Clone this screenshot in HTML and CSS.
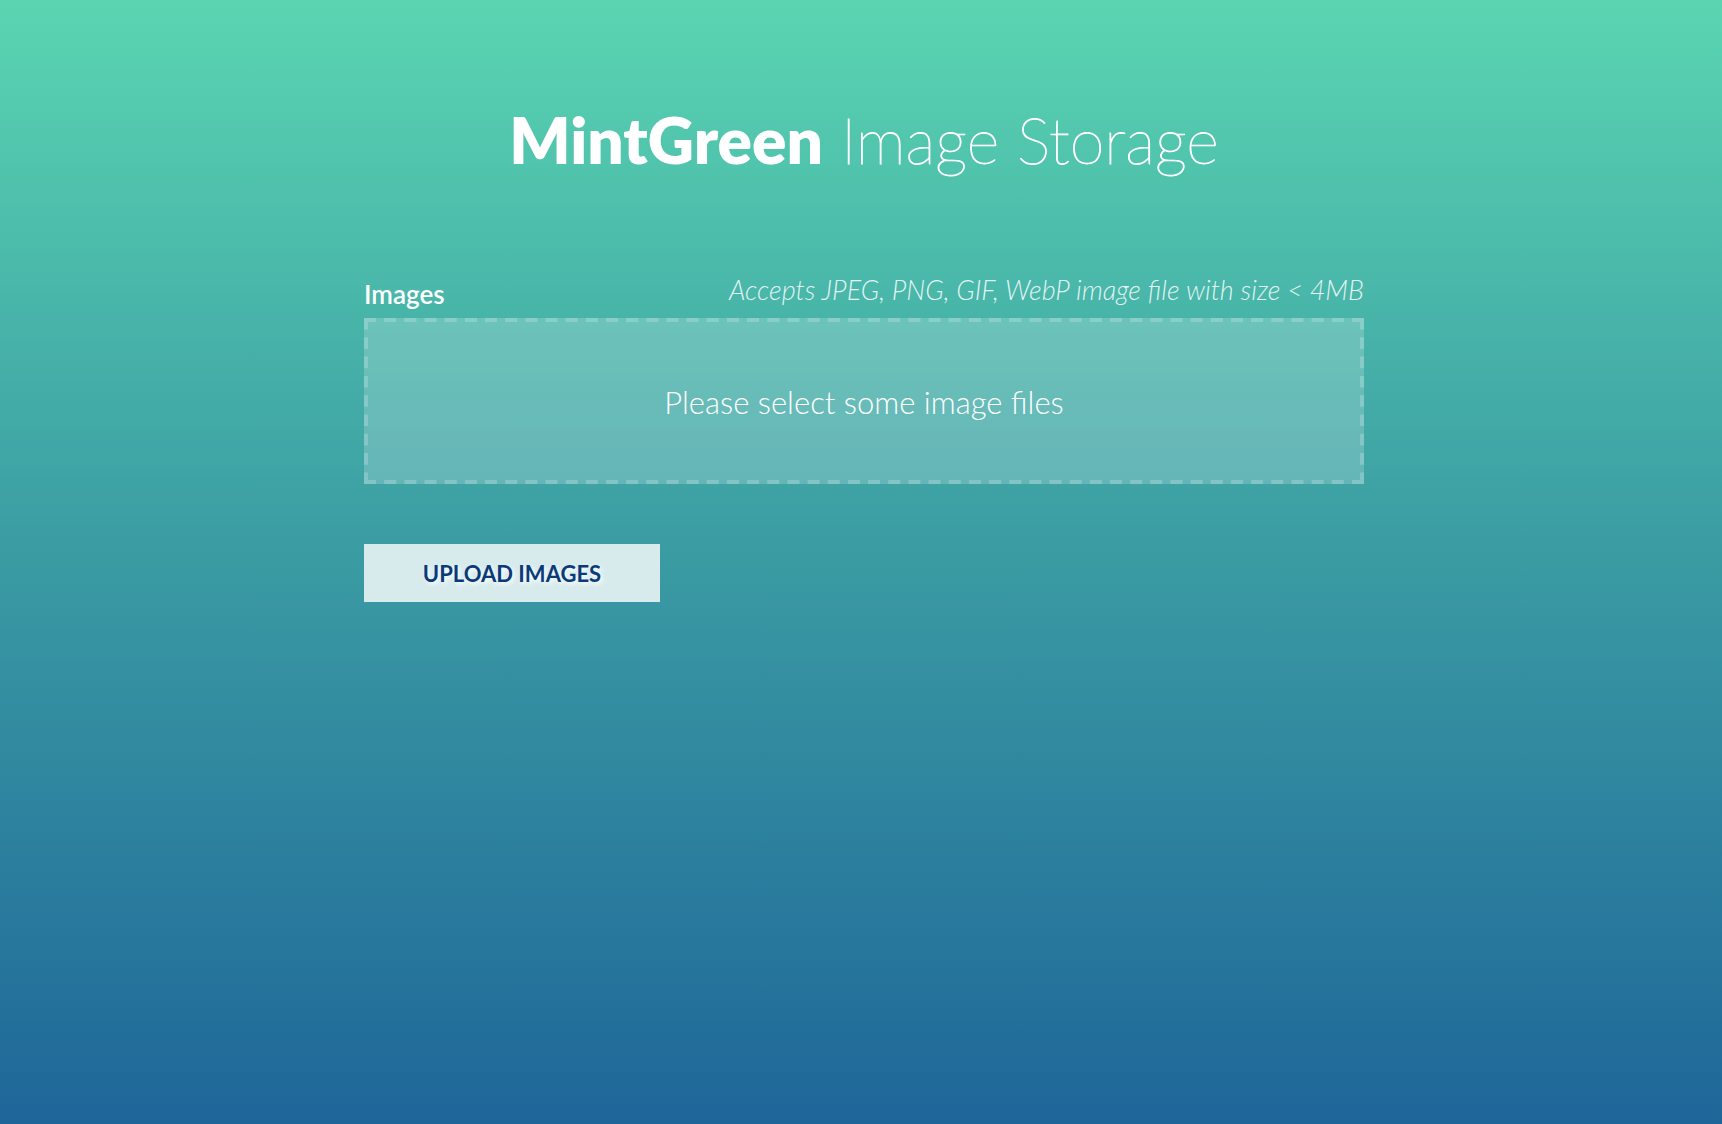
FILE: index.html
```html
<!DOCTYPE html>
<html lang="en">
<head>
<meta charset="utf-8">
<meta name="viewport" content="width=device-width, initial-scale=1">
<title>MintGreen Image Storage</title>
<link rel="stylesheet" href="styles.css">
</head>
<body>
<main class="page">
  <h1 class="title"><strong>MintGreen</strong> Image Storage</h1>
  <form class="upload">
    <div class="upload-head">
      <label class="upload-label" for="images">Images</label>
      <span class="upload-hint" id="hint">Accepts JPEG, PNG, GIF, WebP image file with size &lt; 4MB</span>
    </div>
    <label class="dropzone">
      <svg class="dashes" aria-hidden="true">
        <line x1="0" y1="0" x2="100%" y2="0" pathLength="992"/>
        <line x1="0" y1="100%" x2="100%" y2="100%" pathLength="992"/>
        <line x1="0" y1="0" x2="0" y2="100%" pathLength="172"/>
        <line x1="100%" y1="0" x2="100%" y2="100%" pathLength="172"/>
      </svg>
      <input class="file-input" type="file" id="images" accept="image/*" aria-describedby="hint" multiple>
      <span>Please select some image files</span>
    </label>
    <button class="submit" type="submit">UPLOAD IMAGES</button>
  </form>
</main>
</body>
</html>
```
FILE: styles.css
```css
* { box-sizing: border-box; }

body {
  margin: 0;
  min-height: 100vh;
  padding-left: 6px;
  color: #fff;
  font-family: Lato, sans-serif;
  background: linear-gradient(#5ad5b1, #3a9ba3 50%, #1e6699);
}

.page {
  width: 100%;
  max-width: 1000px;
  margin: 0 auto;
  padding-top: 100px;
}

.title {
  margin: 0 0 80px;
  font-size: 63px;
  line-height: 80px;
  font-weight: 200;
  text-align: center;
  -webkit-text-stroke: 1px #fff;
}

.title strong {
  font-size: 64px;
  font-weight: 800;
  -webkit-text-stroke: 0;
}

.upload-head {
  display: flex;
  justify-content: space-between;
  align-items: flex-start;
  height: 58px;
}

.upload-label {
  padding-top: 18px;
  font-size: 26px;
  line-height: 32px;
  font-weight: 600;
}

.upload-hint {
  padding-top: 14px;
  color: rgba(255, 255, 255, 0.85);
  font-size: 27px;
  line-height: 32px;
  font-weight: 300;
  font-style: italic;
}

.dropzone {
  position: relative;
  display: flex;
  align-items: center;
  justify-content: center;
  min-height: 166px;
  padding-top: 2px;
  background: rgba(255, 255, 255, 0.2);
  font-size: 31px;
  line-height: 40px;
  font-weight: 300;
  cursor: pointer;
}

/* Half of each 8px stroke falls outside the svg, leaving a 4px border. */
.dashes {
  position: absolute;
  inset: 0;
  width: 100%;
  height: 100%;
  overflow: hidden;
  stroke: #fff;
  stroke-width: 8px;
  stroke-dasharray: 12 8;
  opacity: 0.2;
}

.file-input {
  position: absolute;
  width: 1px;
  height: 1px;
  opacity: 0;
}

.submit {
  display: block;
  width: 296px;
  margin-top: 60px;
  padding: 14px 16px 12px;
  border: 0;
  background: rgba(255, 255, 255, 0.8);
  color: #0c3a78;
  font: 700 22px/32px Lato, sans-serif;
  text-shadow: 2px 2px 4px #fff;
  cursor: pointer;
}
```
